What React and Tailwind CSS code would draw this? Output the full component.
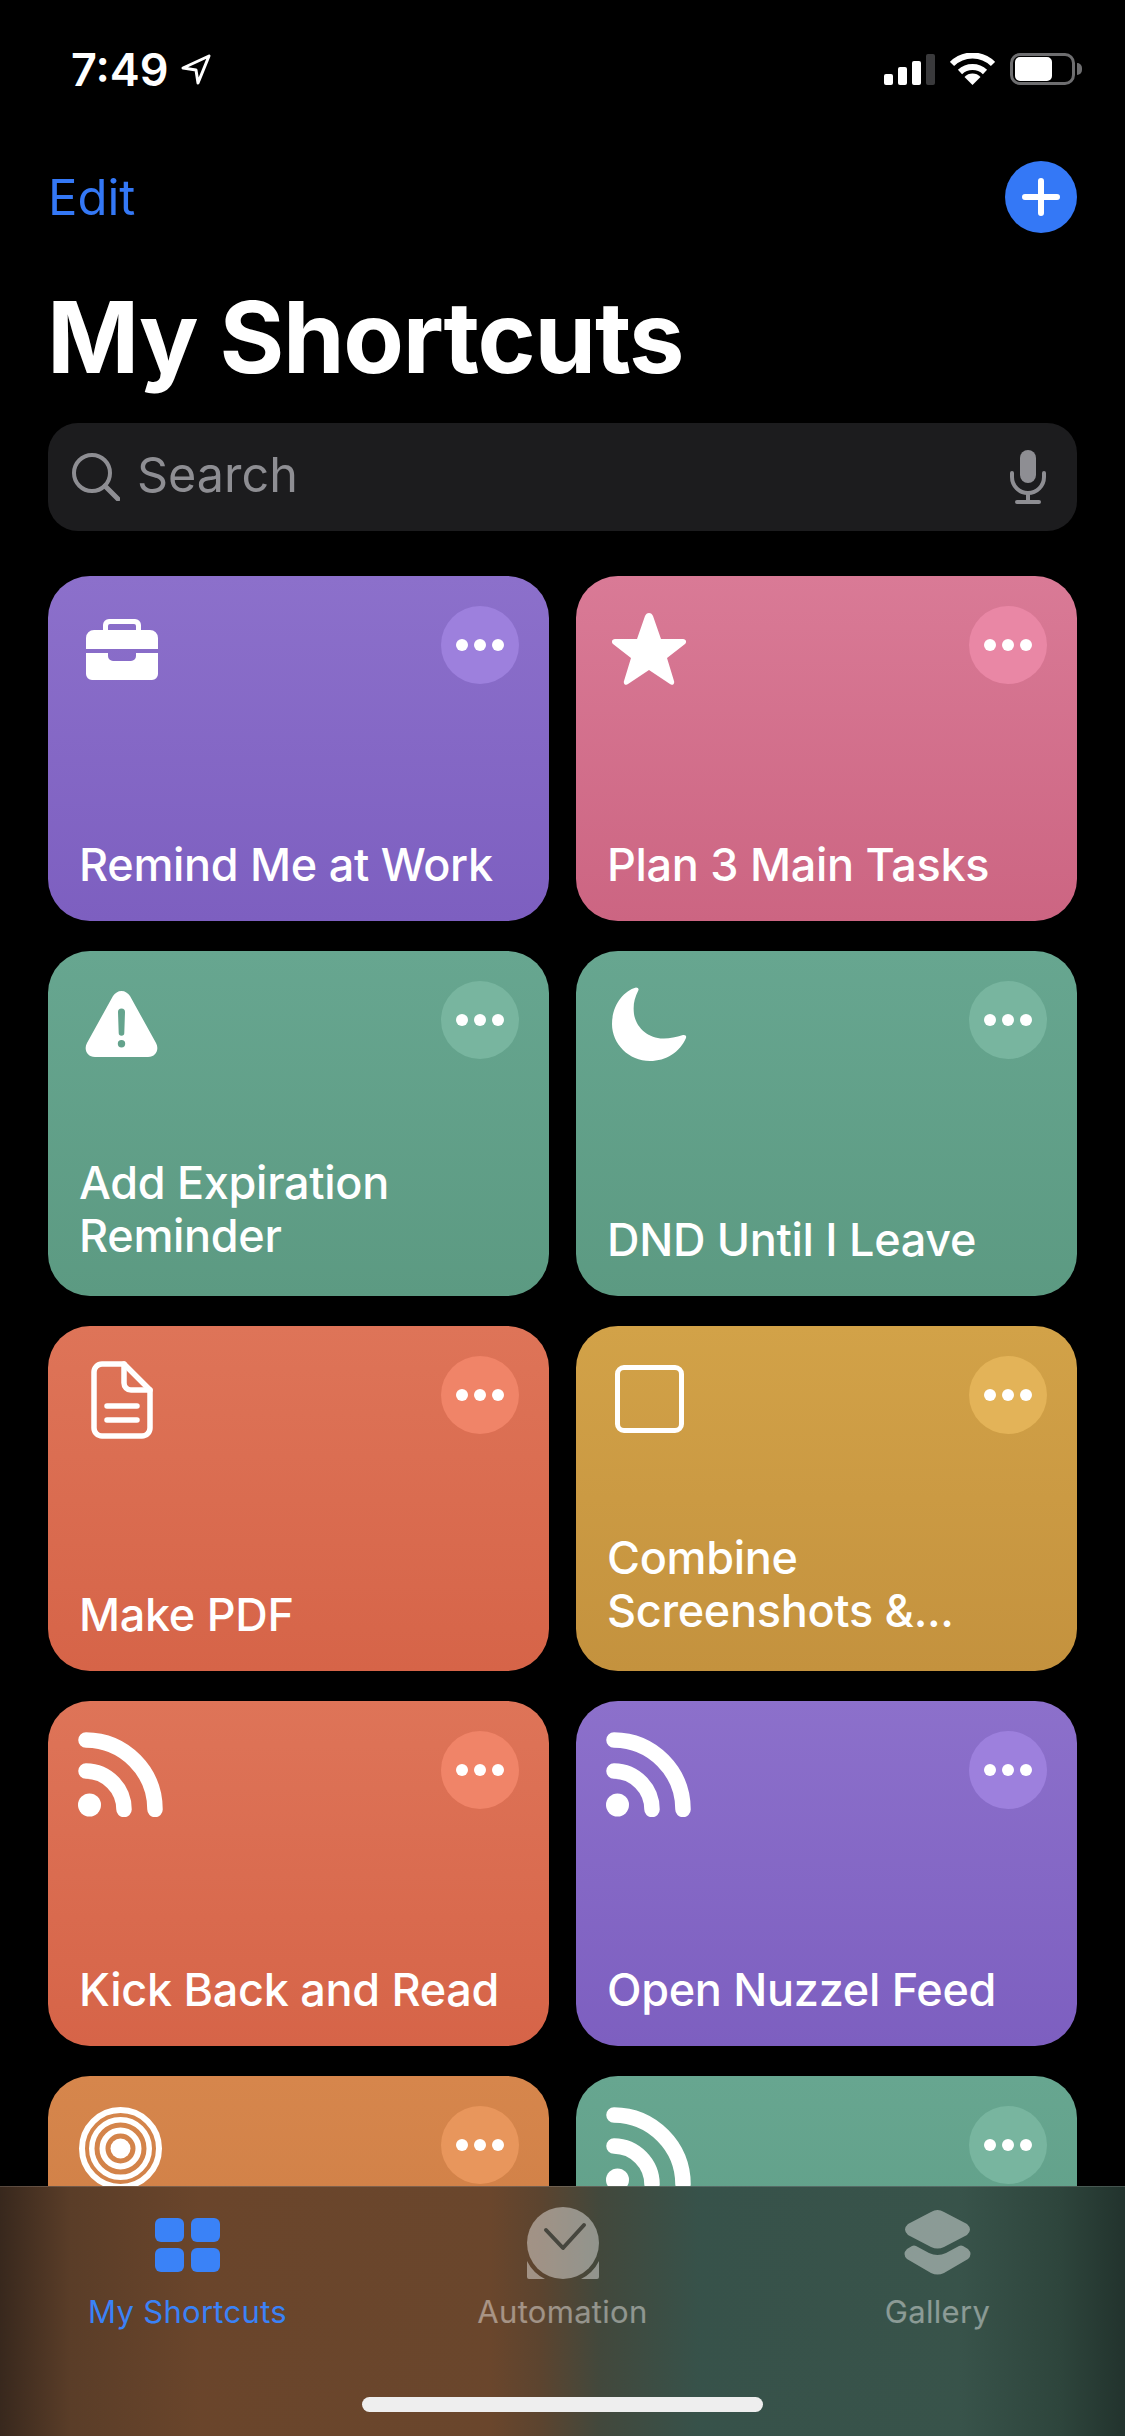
import React from 'react';

const font = { fontFamily: 'Inter, "Noto Sans", sans-serif' };

const purple = { card: 'from-[#8c70cb] to-[#7d5fc0]', more: 'bg-[#9d80dd]' };
const green = { card: 'from-[#67a690] to-[#5c9a82]', more: 'bg-[#78b59f]' };
const coral = { card: 'from-[#de7458] to-[#d66448]', more: 'bg-[#f08468]' };

// the last row runs under the tab bar, its titles are never seen
const shortcuts = [
    { id: 1, title: 'Remind Me at Work', icon: 'briefcase', pad: 'pb-[30px]', ...purple },
    { id: 2, title: 'Plan 3 Main Tasks', icon: 'star', pad: 'pb-[30px]', card: 'from-[#d97a96] to-[#cc6582]', more: 'bg-[#e987a5]' },
    { id: 3, title: 'Add Expiration Reminder', icon: 'warning', pad: 'pb-[34px]', ...green },
    { id: 4, title: 'DND Until I Leave', icon: 'moon', pad: 'pb-[30px]', ...green },
    { id: 5, title: 'Make PDF', icon: 'doc', pad: 'pb-[30px]', ...coral },
    { id: 6, title: 'Combine Screenshots &...', icon: 'square', pad: 'pb-[34px]', card: 'from-[#d2a248] to-[#c4923e]', more: 'bg-[#e3b358]' },
    { id: 7, title: 'Kick Back and Read', icon: 'rss', pad: 'pb-[30px]', ...coral },
    { id: 8, title: 'Open Nuzzel Feed', icon: 'rss', pad: 'pb-[30px]', ...purple },
    { id: 9, title: '', icon: 'target', pad: 'pb-[30px]', card: 'from-[#d6864c] to-[#ca7a42]', more: 'bg-[#e8965c]' },
    { id: 10, title: '', icon: 'rss', pad: 'pb-[30px]', ...green },
];

function ShortcutIcon({ name }) {
    if (name === 'briefcase') {
        return (
            <svg className="absolute left-[38px] top-[43px]" width="72" height="61" viewBox="0 0 72 61" fill="white">
                <path d="M17 11V6a6 6 0 0 1 6-6h26a6 6 0 0 1 6 6v5h9a8 8 0 0 1 8 8v11H0V19a8 8 0 0 1 8-8zM22 11h28V7a2 2 0 0 0-2-2H24a2 2 0 0 0-2 2z" fillRule="evenodd" />
                <path d="M0 34h22v3a5 5 0 0 0 5 5h18a5 5 0 0 0 5-5v-3h22v21a6 6 0 0 1-6 6H6a6 6 0 0 1-6-6z" />
            </svg>
        );
    }
    if (name === 'star') {
        return (
            <svg className="absolute left-[36px] top-[37px]" width="74" height="72" viewBox="0 0 74 72" fill="white">
                <path d="M37 0c2 0 3 1 4 3l8 23h22c3 0 4 3 2 5L55 45l7 23c1 3-2 5-4 3L37 57 16 71c-2 2-5 0-4-3l7-23L1 31c-2-2-1-5 2-5h22l8-23c1-2 2-3 4-3z" />
            </svg>
        );
    }
    if (name === 'warning') {
        return (
            <svg className="absolute left-[37px] top-[40px]" width="73" height="66" viewBox="0 0 73 66">
                <path fill="white" fillRule="evenodd" d="M36.500 0c3.500 0 6.500 2 8.500 5l26 47c3.500 6 0 14-8 14H10c-8 0-11.500-8-8-14L28 5c2-3 5-5 8.500-5zM33 21a3.500 3.500 0 0 1 7 0l-.7 21a2.800 2.800 0 0 1-5.600 0zM36.500 49a3.700 3.700 0 1 0 0 7.400 3.700 3.700 0 0 0 0-7.400z" />
            </svg>
        );
    }
    if (name === 'moon') {
        return (
            <svg className="absolute left-[36px] top-[36px]" width="75" height="74" viewBox="0 0 75 74" fill="white">
                <path d="M24 .5Q27 .5 26.500 3C22 12 21 18 22 27C24 41 37 52 52 51.500C58 51.500 64 50 71 48Q75 47.500 74 51C68 65 54 74 38 74C17 74 0 57 0 37C0 19 11 4 24 .5z" />
            </svg>
        );
    }
    if (name === 'doc') {
        return (
            <svg className="absolute left-[43px] top-[35px]" width="62" height="78" viewBox="0 0 62 78" fill="none" stroke="white" strokeWidth="5.500" strokeLinecap="round" strokeLinejoin="round">
                <path d="M11 3h22l26 26v38a8 8 0 0 1-8 8H11a8 8 0 0 1-8-8V11a8 8 0 0 1 8-8z" />
                <path d="M33 3v19a7 7 0 0 0 7 7h19" />
                <path d="M16 45h30M16 59h30" />
            </svg>
        );
    }
    if (name === 'square') {
        return <div className="absolute left-[39px] top-[39px] h-[68px] w-[69px] rounded-[9px] border-[5px] border-white" />;
    }
    if (name === 'target') {
        return (
            <svg className="absolute left-[31px] top-[31px]" width="83" height="83" viewBox="0 0 83 83" fill="none" stroke="white">
                <circle cx="41.500" cy="41.500" r="38.500" strokeWidth="6" />
                <circle cx="41.500" cy="41.500" r="28.750" strokeWidth="5.500" />
                <circle cx="41.500" cy="41.500" r="18" strokeWidth="6" />
                <circle cx="41.500" cy="41.500" r="10" fill="white" stroke="none" />
            </svg>
        );
    }
    // rss
    return (
        <svg className="absolute left-[30px] top-[31px]" width="85" height="85" viewBox="0 0 85 85" fill="none" stroke="white" strokeWidth="15.500" strokeLinecap="round">
            <circle cx="11.500" cy="73" r="11.500" fill="white" stroke="none" />
            <path d="M8 8A69.500 69.500 0 0 1 77 77.500" />
            <path d="M8 39A38.500 38.500 0 0 1 46 77.500" />
        </svg>
    );
}

function ShortcutCard({ item }) {
    return (
        <div className={`relative flex h-[345px] flex-col justify-end rounded-[42px] bg-gradient-to-b px-[31px] ${item.pad} ${item.card}`}>
            <ShortcutIcon name={item.icon} />
            <div className={`absolute right-[30px] top-[30px] flex h-[78px] w-[78px] items-center justify-center gap-[6px] rounded-full ${item.more}`}>
                <span className="h-[12px] w-[12px] rounded-full bg-white" />
                <span className="h-[12px] w-[12px] rounded-full bg-white" />
                <span className="h-[12px] w-[12px] rounded-full bg-white" />
            </div>
            <p className="text-[45px] font-medium leading-[53px] tracking-[-0.3px] text-white">{item.title}</p>
        </div>
    );
}

function StatusBar() {
    return (
        <div className="flex h-[138px] items-center justify-between pl-[71px] pr-[43px]">
            <div className="flex items-center gap-[12px]">
                <span className="text-[45px] font-semibold leading-none text-white">7:49</span>
                <svg width="30" height="31" viewBox="0 0 30 31" fill="none" stroke="white" strokeWidth="3" strokeLinejoin="round">
                    <path d="M28 2L2 14l13 2 2 13z" />
                </svg>
            </div>
            <div className="flex items-center gap-[15px]">
                <div className="flex items-end gap-[5px]">
                    <span className="h-[11px] w-[9px] rounded-[2px] bg-white" />
                    <span className="h-[18px] w-[9px] rounded-[2px] bg-white" />
                    <span className="h-[24px] w-[9px] rounded-[2px] bg-white" />
                    <span className="h-[31px] w-[9px] rounded-[2px] bg-[#3a3a3c]" />
                </div>
                <svg width="45" height="32" viewBox="0 0 45 32" fill="none" stroke="white" strokeWidth="6">
                    <path d="M2 11a29 29 0 0 1 41 0" />
                    <path d="M10 19a18 18 0 0 1 25 0" />
                    <path d="M22.500 32l-8-8a11 11 0 0 1 16 0z" fill="white" stroke="none" />
                </svg>
                <div className="flex items-center gap-[2px]">
                    <div className="h-[32px] w-[65px] rounded-[10px] border-[3px] border-[#6e6e70] p-[1px] pl-[2px]">
                        <div className="h-full w-[37px] rounded-[5px] bg-white" />
                    </div>
                    <span className="h-[12px] w-[5px] rounded-r-full bg-[#6e6e70]" />
                </div>
            </div>
        </div>
    );
}

function SearchBar() {
    return (
        <div className="mx-[48px] mt-[26px] flex h-[108px] items-center rounded-[30px] bg-[#1c1c1e] pl-[24px] pr-[31px]">
            <svg width="48" height="48" viewBox="0 0 48 48" fill="none" stroke="#8e8e93" strokeWidth="4" strokeLinecap="round">
                <circle cx="20" cy="20" r="18" />
                <path d="M33 33l13 13" strokeWidth="5" />
            </svg>
            <span className="mb-[3px] ml-[17px] flex-1 text-[48.500px] leading-none text-[#8e8e93]">Search</span>
            <svg width="36" height="54" viewBox="0 0 36 54" fill="none" stroke="#8e8e93" strokeWidth="4" strokeLinecap="round">
                <rect x="10" y="0" width="16" height="33" rx="8" fill="#8e8e93" stroke="none" />
                <path d="M2 23v4a16 16 0 0 0 32 0v-4" />
                <path d="M18 43v8M7 52h22" />
            </svg>
        </div>
    );
}

function TabBar() {
    return (
        <div className="absolute inset-x-0 bottom-0 h-[250px] border-t border-white/15 bg-[linear-gradient(to_right,#38281d_0px,#5a3d28_70px,#6a452b_200px,#6a462c_490px,#5c442f_540px,#42483c_600px,#37524a_700px,#38534a_960px,#2e453c_1060px,#22332d_1125px)]">
            <div className="grid grid-cols-3 pt-[20px]">
                <div className="flex flex-col items-center">
                    <div className="flex h-[76px] items-center">
                        <div className="grid grid-cols-2 gap-x-[7px] gap-y-[6px]">
                            <span className="h-[24px] w-[29px] rounded-[6px] bg-[#3a82f7]" />
                            <span className="h-[24px] w-[29px] rounded-[6px] bg-[#3a82f7]" />
                            <span className="h-[24px] w-[29px] rounded-[6px] bg-[#3a82f7]" />
                            <span className="h-[24px] w-[29px] rounded-[6px] bg-[#3a82f7]" />
                        </div>
                    </div>
                    <span className="mt-[11px] text-[31px] leading-[36px] tracking-[0.3px] text-[#3a82f7]">My Shortcuts</span>
                </div>
                <div className="flex flex-col items-center">
                    <svg width="72" height="76" viewBox="0 0 72 76" fill="#ffffff" fillOpacity="0.42">
                        <path d="M0 54A39.500 39.500 0 0 0 18 72H2a2 2 0 0 1-2-2z" />
                        <path d="M72 54A39.500 39.500 0 0 1 54 72H70a2 2 0 0 0 2-2z" />
                        <circle cx="36" cy="36" r="36" />
                        <path d="M19 23l17 18 21-23" fill="none" stroke="#46463e" strokeOpacity="1" strokeWidth="4" strokeLinecap="round" strokeLinejoin="round" />
                    </svg>
                    <span className="mt-[11px] text-[31px] leading-[36px] tracking-[0.3px] text-white/42">Automation</span>
                </div>
                <div className="flex flex-col items-center">
                    <svg width="68" height="76" viewBox="0 0 68 76" fill="#ffffff" fillOpacity="0.42">
                        <path d="M27 5Q33.500 1 40 5L63 17Q69 22.500 63 28L40 40Q33.500 43 27 40L4 28Q-2 22.500 4 17z" />
                        <path d="M12 39L25 46Q33.500 50 42 46L55 39Q57 38 59 39L64 42Q69 47 64 52L40 66Q33.500 69 27 66L3 52Q-2 47 3 42L8 39Q10 38 12 39z" />
                    </svg>
                    <span className="mt-[11px] text-[31px] leading-[36px] tracking-[0.3px] text-white/42">Gallery</span>
                </div>
            </div>
            <div className="absolute bottom-[24px] left-[362px] h-[15px] w-[401px] rounded-full bg-[#eeeeee]" />
        </div>
    );
}

export default function App() {
    return (
        <div className="relative h-[2436px] w-[1125px] overflow-hidden bg-black" style={font}>
            <StatusBar />
            {/* Edit and add button */}
            <div className="mx-[48px] mt-[23px] flex h-[72px] items-center justify-between">
                <span className="text-[49px] leading-none text-[#3478f6]">Edit</span>
                <div className="flex h-[72px] w-[72px] items-center justify-center rounded-full bg-[#3478f6]">
                    <svg width="38" height="38" viewBox="0 0 38 38" stroke="white" strokeWidth="6" strokeLinecap="round">
                        <path d="M19 3v32M3 19h32" />
                    </svg>
                </div>
            </div>
            <h1 className="mx-[47px] mt-[44px] text-[99px] font-bold leading-[120px] tracking-[-1.300px] text-white">My Shortcuts</h1>
            <SearchBar />
            <div className="mx-[48px] mt-[45px] grid grid-cols-2 gap-x-[27px] gap-y-[30px]">
                {shortcuts.map((item) => (
                    <ShortcutCard key={item.id} item={item} />
                ))}
            </div>
            <TabBar />
        </div>
    );
}
